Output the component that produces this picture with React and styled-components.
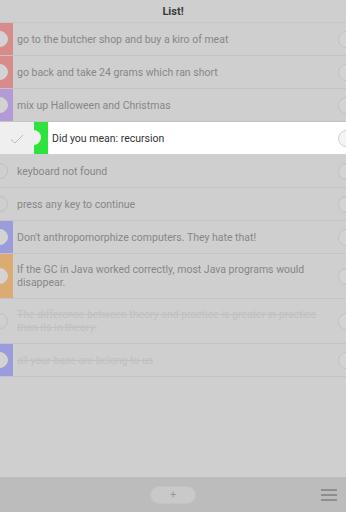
import React from 'react';
import styled, { createGlobalStyle } from 'styled-components';

const GlobalStyle = createGlobalStyle`
  html, body {
    margin: 0;
    padding: 0;
    height: 100%;
    background: #cfcfcf;
    font-family: Roboto, "Noto Sans", sans-serif;
  }
  #root {
    height: 100%;
  }
`;

const todos = [
  { text: 'go to the butcher shop and buy a kiro of meat', color: '#d88b8b' },
  { text: 'go back and take 24 grams which ran short', color: '#d88b8b' },
  { text: 'mix up Halloween and Christmas', color: '#b29bd6' },
  { text: 'Did you mean: recursion', color: '#2ee43c', swiped: true },
  { text: 'keyboard not found' },
  { text: 'press any key to continue' },
  { text: "Don't anthropomorphize computers. They hate that!", color: '#9b9cdb' },
  { text: 'If the GC in Java worked correctly, most Java programs would disappear.', color: '#dcab73' },
  { text: 'The difference between theory and practice is greater in practice than its in theory.', done: true },
  { text: 'all your base are belong to us', color: '#9b9cdb', done: true },
];

const App = () => (
  <>
    <GlobalStyle />
    <Screen>
      <Header>List!</Header>
      <List>
        {todos.map((t, i) =>
          t.swiped ? (
            <SwipedRow key={i}>
              <ActionArea>
                <svg width="14" height="10" viewBox="0 0 14 10">
                  <path d="M1 5.5 L5 9 L13 1" fill="none" stroke="#b9b9b9" strokeWidth="1" />
                </svg>
              </ActionArea>
              <Bar color={t.color} $width={14}>
                <Notch />
              </Bar>
              <SwipedText>{t.text}</SwipedText>
              <RightDot $light />
            </SwipedRow>
          ) : (
            <Row key={i}>
              <Bar color={t.color || 'transparent'} $width={13}>
                <Handle $filled={!!t.color} />
              </Bar>
              <Text $done={t.done}>{t.text}</Text>
              <RightDot />
            </Row>
          )
        )}
      </List>
      <Footer>
        <AddButton>+</AddButton>
        <Menu>
          <span />
          <span />
          <span />
        </Menu>
      </Footer>
    </Screen>
  </>
);

export default App;

const Screen = styled.div`
  display: flex;
  flex-direction: column;
  height: 512px;
  width: 346px;
  overflow: hidden;
  background: #cfcfcf;
`;

const Header = styled.div`
  height: 22px;
  border-bottom: 1px solid #c6c6c6;
  display: flex;
  align-items: center;
  justify-content: center;
  font-size: 11px;
  font-weight: bold;
  color: #3a3a3a;
`;

const List = styled.div`
  flex: 1;
  display: flex;
  flex-direction: column;
`;

const Row = styled.div`
  position: relative;
  display: flex;
  align-items: stretch;
  min-height: 32px;
  border-bottom: 1px solid #c4c4c4;
  overflow: hidden;
`;

const SwipedRow = styled(Row)`
  background: #ffffff;
  border-bottom-color: #cfcfcf;
`;

const Bar = styled.div`
  position: relative;
  flex: 0 0 ${(p) => p.$width}px;
  background: ${(p) => p.color};
`;

const Handle = styled.div`
  position: absolute;
  left: -8px;
  top: 50%;
  width: 14px;
  height: 14px;
  margin-top: -8px;
  border-radius: 50%;
  background: ${(p) => (p.$filled ? '#d3d3d3' : 'transparent')};
  border: 1px solid ${(p) => (p.$filled ? '#d3d3d3' : '#c0c0c0')};
`;

const ActionArea = styled.div`
  flex: 0 0 34px;
  background: #efefef;
  display: flex;
  align-items: center;
  justify-content: center;
  padding-top: 1px;
`;

const Notch = styled.div`
  position: absolute;
  left: -8px;
  top: 50%;
  width: 15px;
  height: 15px;
  margin-top: -8px;
  border-radius: 50%;
  background: #efefef;
`;

const Text = styled.div`
  flex: 1;
  display: flex;
  align-items: center;
  padding: 9px 22px 9px 4px;
  font-size: 10.5px;
  line-height: 13px;
  color: ${(p) => (p.$done ? '#c0c0c0' : '#878787')};
  text-decoration: ${(p) => (p.$done ? 'line-through' : 'none')};
`;

const SwipedText = styled(Text)`
  color: #333333;
  padding-left: 4px;
`;

const RightDot = styled.div`
  position: absolute;
  right: -9px;
  top: 50%;
  width: 15px;
  height: 15px;
  margin-top: -8px;
  border-radius: 50%;
  background: ${(p) => (p.$light ? '#f3f3f3' : '#d3d3d3')};
  border: 1px solid ${(p) => (p.$light ? '#d2d2d2' : '#c2c2c2')};
`;

const Footer = styled.div`
  position: relative;
  height: 35px;
  background: #bcbcbc;
  display: flex;
  align-items: center;
  justify-content: center;
`;

const AddButton = styled.div`
  width: 44px;
  height: 16px;
  border-radius: 9px;
  background: #c9c9c9;
  border: 1px solid #c3c3c3;
  color: #9a9a9a;
  font-size: 11px;
  line-height: 16px;
  text-align: center;
  margin-top: 1px;
`;

const Menu = styled.div`
  position: absolute;
  right: 9px;
  top: 12px;
  display: flex;
  flex-direction: column;
  gap: 3px;

  span {
    display: block;
    width: 16px;
    height: 2px;
    background: #8e8e8e;
  }
`;
